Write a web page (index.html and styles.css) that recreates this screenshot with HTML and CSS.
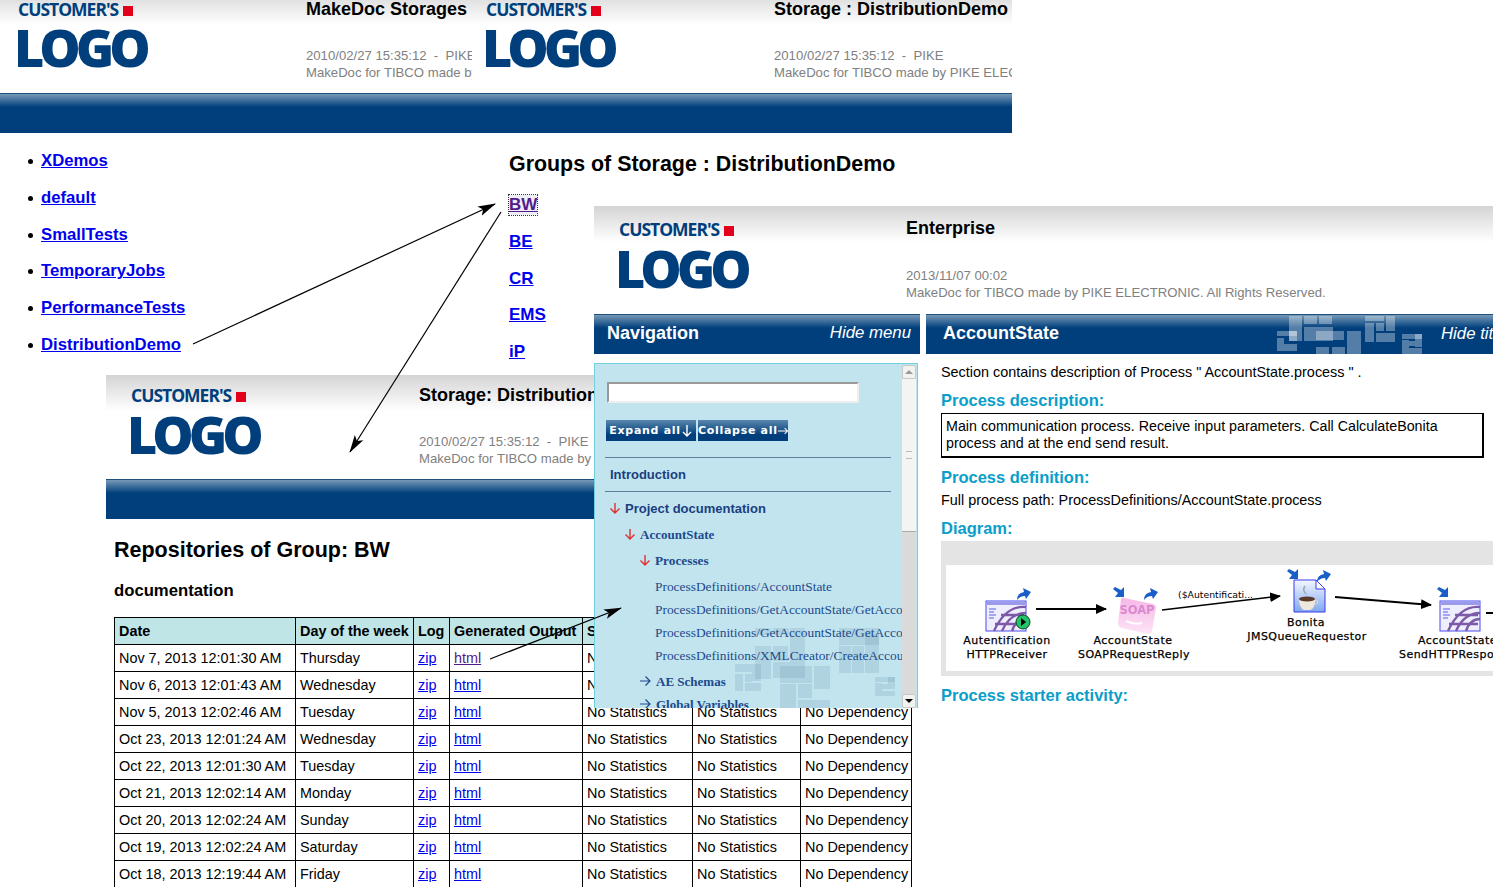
FILE: index.html
```html
<!DOCTYPE html>
<html lang="en">
<head>
  <meta charset="UTF-8" />
  <title>MakeDoc Storages</title>
  <link rel="stylesheet" href="styles.css">
</head>
<body>
<div class="desk">

  <!-- window 1: storages -->
  <div class="win win-storages">
    <div class="win-head">
      <div class="logo"><div class="logo-top">CUSTOMER'S<span class="logo-mark"></span></div><div class="logo-main">LOGO</div></div>
      <div class="head-text">
        <div class="head-title">MakeDoc Storages</div>
        <div class="head-sub">2010/02/27 15:35:12 &nbsp;-&nbsp; PIKE ELECTRONIC</div>
        <div class="head-sub">MakeDoc for TIBCO made by PIKE ELECTRONIC</div>
      </div>
    </div>
    <div class="win-band"></div>
    <ul class="storage-list">
      <li><a href="#">XDemos</a></li>
      <li><a href="#">default</a></li>
      <li><a href="#">SmallTests</a></li>
      <li><a href="#">TemporaryJobs</a></li>
      <li><a href="#">PerformanceTests</a></li>
      <li><a href="#">DistributionDemo</a></li>
    </ul>
  </div>

  <!-- window 2: groups -->
  <div class="win win-groups">
    <div class="win-head">
      <div class="logo"><div class="logo-top">CUSTOMER'S<span class="logo-mark"></span></div><div class="logo-main">LOGO</div></div>
      <div class="head-text">
        <div class="head-title">Storage : DistributionDemo</div>
        <div class="head-sub">2010/02/27 15:35:12 &nbsp;-&nbsp; PIKE</div>
        <div class="head-sub">MakeDoc for TIBCO made by PIKE ELECTRONIC. All Rights Reserved.</div>
      </div>
    </div>
    <div class="win-band"></div>
    <h2 class="groups-title">Groups of Storage : DistributionDemo</h2>
    <div class="group-links">
      <a href="#" class="seen focused">BW</a>
      <a href="#">BE</a>
      <a href="#">CR</a>
      <a href="#">EMS</a>
      <a href="#">iP</a>
    </div>
  </div>

  <!-- window 3: repositories -->
  <div class="win win-repos">
    <div class="win-head">
      <div class="logo"><div class="logo-top">CUSTOMER'S<span class="logo-mark"></span></div><div class="logo-main">LOGO</div></div>
      <div class="head-text">
        <div class="head-title">Storage: DistributionDemo</div>
        <div class="head-sub">2010/02/27 15:35:12 &nbsp;-&nbsp; PIKE</div>
        <div class="head-sub">MakeDoc for TIBCO made by PIKE ELECTRONIC</div>
      </div>
    </div>
    <div class="win-band"></div>
    <div class="repos-body">
      <h2 class="repos-title">Repositories of Group: BW</h2>
      <h3 class="repos-sub">documentation</h3>
      <table class="repos">
        <colgroup>
          <col class="c-date"><col class="c-day"><col class="c-log"><col class="c-out"><col class="c-st"><col class="c-st2"><col class="c-dep">
        </colgroup>
        <thead>
          <tr><th>Date</th><th>Day of the week</th><th>Log</th><th>Generated Output</th><th>Statistics</th><th>Statistics</th><th>Dependency</th></tr>
        </thead>
        <tbody>
          <tr><td>Nov 7, 2013 12:01:30 AM</td><td>Thursday</td><td><a href="#">zip</a></td><td><a href="#" class="seen">html</a></td><td>No Statistics</td><td>No Statistics</td><td>No Dependency</td></tr>
          <tr><td>Nov 6, 2013 12:01:43 AM</td><td>Wednesday</td><td><a href="#">zip</a></td><td><a href="#">html</a></td><td>No Statistics</td><td>No Statistics</td><td>No Dependency</td></tr>
          <tr><td>Nov 5, 2013 12:02:46 AM</td><td>Tuesday</td><td><a href="#">zip</a></td><td><a href="#">html</a></td><td>No Statistics</td><td>No Statistics</td><td>No Dependency</td></tr>
          <tr><td>Oct 23, 2013 12:01:24 AM</td><td>Wednesday</td><td><a href="#">zip</a></td><td><a href="#">html</a></td><td>No Statistics</td><td>No Statistics</td><td>No Dependency</td></tr>
          <tr><td>Oct 22, 2013 12:01:30 AM</td><td>Tuesday</td><td><a href="#">zip</a></td><td><a href="#">html</a></td><td>No Statistics</td><td>No Statistics</td><td>No Dependency</td></tr>
          <tr><td>Oct 21, 2013 12:02:14 AM</td><td>Monday</td><td><a href="#">zip</a></td><td><a href="#">html</a></td><td>No Statistics</td><td>No Statistics</td><td>No Dependency</td></tr>
          <tr><td>Oct 20, 2013 12:02:24 AM</td><td>Sunday</td><td><a href="#">zip</a></td><td><a href="#">html</a></td><td>No Statistics</td><td>No Statistics</td><td>No Dependency</td></tr>
          <tr><td>Oct 19, 2013 12:02:24 AM</td><td>Saturday</td><td><a href="#">zip</a></td><td><a href="#">html</a></td><td>No Statistics</td><td>No Statistics</td><td>No Dependency</td></tr>
          <tr><td>Oct 18, 2013 12:19:44 AM</td><td>Friday</td><td><a href="#">zip</a></td><td><a href="#">html</a></td><td>No Statistics</td><td>No Statistics</td><td>No Dependency</td></tr>
        </tbody>
      </table>
    </div>
  </div>

  <!-- window 4: enterprise -->
  <div class="win win-ent">
    <div class="win-head">
      <div class="logo"><div class="logo-top">CUSTOMER'S<span class="logo-mark"></span></div><div class="logo-main">LOGO</div></div>
      <div class="head-text">
        <div class="head-title">Enterprise</div>
        <div class="head-sub">2013/11/07 00:02</div>
        <div class="head-sub">MakeDoc for TIBCO made by PIKE ELECTRONIC. All Rights Reserved.</div>
      </div>
    </div>
    <div class="ent-cols">
      <div class="nav-col">
        <div class="bar">
          <span class="bar-title">Navigation</span>
          <span class="bar-link">Hide menu</span>
        </div>
        <div class="nav-panel">
          <svg class="panel-deco" viewBox="0 0 300 345" width="300" height="345">
            <g transform="translate(13 0)">
              <rect x="147" y="264" width="16" height="7"/><rect x="165" y="264" width="16" height="7"/><rect x="182" y="264" width="15" height="50"/>
              <rect x="147" y="282" width="16" height="33"/><rect x="165" y="282" width="15" height="15"/><rect x="165" y="298" width="17" height="16"/>
              <rect x="127" y="300" width="17" height="8"/><rect x="127" y="310" width="8" height="17"/><rect x="137" y="310" width="7" height="8"/>
              <rect x="137" y="319" width="16" height="8"/><rect x="144" y="300" width="9" height="17"/>
              <rect x="172" y="302" width="32" height="17"/><rect x="206" y="302" width="16" height="23"/><rect x="172" y="320" width="16" height="25"/>
              <rect x="190" y="320" width="14" height="14"/><rect x="190" y="336" width="32" height="9"/>
              <rect x="231" y="264" width="40" height="17"/><rect x="231" y="282" width="12" height="27"/><rect x="244" y="282" width="12" height="12"/>
              <rect x="257" y="270" width="14" height="39"/><rect x="244" y="295" width="12" height="14"/>
              <rect x="267" y="313" width="20" height="5"/><rect x="267" y="319" width="7" height="13"/><rect x="274" y="320" width="6" height="5"/>
              <rect x="280" y="313" width="7" height="12"/><rect x="274" y="327" width="13" height="5"/>
            </g>
          </svg>
          <div class="panel-scroll">
            <div class="nav-input"></div>
            <div class="nav-btns">
              <span class="nav-btn">Expand all<svg width="12" height="14" viewBox="0 0 12 14"><path d="M6 1V12M2 8l4 4 4-4" fill="none" stroke="#fff" stroke-width="1.4"/></svg></span>
              <span class="nav-btn">Collapse all<svg width="14" height="12" viewBox="0 0 14 12"><path d="M0 6H13M9 2l4 4-4 4" fill="none" stroke="#fff" stroke-width="1.4"/></svg></span>
            </div>
            <div class="nav-intro">Introduction</div>
            <div class="tree tree-l1"><svg class="tw" width="12" height="12" viewBox="0 0 12 12"><path d="M6 1V11M1.500 6.500L6 11l4.500-4.500" fill="none" stroke="#e03030" stroke-width="1.4"/></svg>Project documentation</div>
            <div class="tree tree-l2"><svg class="tw" width="12" height="12" viewBox="0 0 12 12"><path d="M6 1V11M1.500 6.500L6 11l4.500-4.500" fill="none" stroke="#e03030" stroke-width="1.4"/></svg>AccountState</div>
            <div class="tree tree-l3"><svg class="tw" width="12" height="12" viewBox="0 0 12 12"><path d="M6 1V11M1.500 6.500L6 11l4.500-4.500" fill="none" stroke="#e03030" stroke-width="1.4"/></svg>Processes</div>
            <div class="tree tree-leaf">ProcessDefinitions/AccountState</div>
            <div class="tree tree-leaf">ProcessDefinitions/GetAccountState/GetAccountState</div>
            <div class="tree tree-leaf">ProcessDefinitions/GetAccountState/GetAccountBonita</div>
            <div class="tree tree-leaf">ProcessDefinitions/XMLCreator/CreateAccountState</div>
            <div class="tree tree-l3 tree-closed"><svg class="tw" width="12" height="12" viewBox="0 0 12 12"><path d="M1 6H11M6.500 1.500L11 6l-4.500 4.500" fill="none" stroke="#1c4a8c" stroke-width="1.2"/></svg>AE Schemas</div>
            <div class="tree tree-l3 tree-closed"><svg class="tw" width="12" height="12" viewBox="0 0 12 12"><path d="M1 6H11M6.500 1.500L11 6l-4.500 4.500" fill="none" stroke="#1c4a8c" stroke-width="1.2"/></svg>Global Variables</div>
          </div>
          <div class="sbar">
            <div class="sbar-btn"><span class="tri-up"></span></div>
            <div class="sbar-thumb"><span class="grip"></span></div>
            <div class="sbar-track"></div>
            <div class="sbar-btn"><span class="tri-down"></span></div>
          </div>
        </div>
      </div>
      <div class="main-col">
        <div class="bar bar-main">
          <span class="bar-title">AccountState</span>
          <svg class="bar-deco" width="150" height="40" viewBox="0 0 150 40">
            <g>
              <rect x="12" y="1" width="13" height="25"/><rect x="27" y="1" width="13" height="8"/><rect x="42" y="1" width="13" height="8"/>
              <rect x="27" y="12" width="29" height="14"/><rect x="39" y="16" width="28" height="9"/><rect x="39" y="32" width="13" height="8"/>
              <rect x="55" y="32" width="13" height="8"/><rect x="70" y="16" width="14" height="24"/>
              <rect x="0" y="16" width="20" height="5"/><rect x="0" y="23" width="7" height="13"/><rect x="7" y="29" width="13" height="7"/><rect x="12" y="16" width="8" height="10"/>
              <rect x="88" y="1" width="19" height="5"/><rect x="88" y="8" width="9" height="19"/><rect x="99" y="8" width="8" height="8"/>
              <rect x="109" y="1" width="9" height="15"/><rect x="99" y="18" width="19" height="9"/>
              <rect x="125" y="19" width="20" height="5"/><rect x="125" y="25" width="7" height="14"/><rect x="132" y="26" width="6" height="5"/>
              <rect x="138" y="19" width="7" height="13"/><rect x="132" y="33" width="13" height="6"/>
            </g>
          </svg>
          <span class="bar-link bar-link-cut">Hide title</span>
        </div>
        <div class="main-body">
          <p class="main-text">Section contains description of Process " AccountState.process " .</p>
          <h4 class="sec">Process description:</h4>
          <div class="desc-box">Main communication process. Receive input parameters. Call CalculateBonita process and at the end send result.</div>
          <h4 class="sec sec-def">Process definition:</h4>
          <p class="main-text">Full process path: ProcessDefinitions/AccountState.process</p>
          <h4 class="sec sec-dia">Diagram:</h4>
          <div class="diagram">
            <div class="diagram-inner">
              <svg width="560" height="106" viewBox="946 565 560 106">
                <defs>
                  <path id="d-out" d="M0 13 Q0 6 7 5 L6 1 L14 5 L9 12 L8 9 Q3 9 0 13Z" fill="#1a5fc8"/>
                  <path id="d-in" d="M11 10 L11 0 L8 3 L2 0 L0 2 L5 6 L2 10Z" fill="#1a5fc8"/>
                  <g id="d-web">
                    <rect x="0" y="0" width="40" height="30" fill="#eeeeff" stroke="#4a4af0"/>
                    <rect x="1" y="1" width="38" height="3" fill="#9a9ae8"/>
                    <path d="M3 8h7M3 11h5M3 14h7M3 17h5" stroke="#5a5af0"/>
                    <path d="M8 30 Q20 4 40 6 M16 30 Q24 12 40 12 M26 30 Q30 18 40 18 M9 23 H38 M15 14 H38" fill="none" stroke="#7d5aa8" stroke-width="2.4"/>
                  </g>
                  <linearGradient id="d-paper" x1="0" y1="0" x2="0" y2="1"><stop offset="0" stop-color="#f4f8ff"/><stop offset="1" stop-color="#7fa8f0"/></linearGradient>
                  <linearGradient id="d-tile" x1="0" y1="0" x2="0" y2="1"><stop offset="0" stop-color="#f6b8e6"/><stop offset="1" stop-color="#fde4f6"/></linearGradient>
                  <marker id="d-head" markerWidth="11" markerHeight="10" refX="10" refY="5" orient="auto" markerUnits="userSpaceOnUse"><path d="M0 0L11 5L0 10Z" fill="#000"/></marker>
                </defs>
                <use href="#d-web" x="986" y="601"/>
                <use href="#d-out" x="1017" y="587"/>
                <circle cx="1023" cy="622" r="7" fill="#22c46a" stroke="#0a4a2a"/>
                <path d="M1021 618l5 4-5 4Z" fill="#000"/>
                <path d="M1036 609H1106" stroke="#000" stroke-width="2" marker-end="url(#d-head)"/>
                <text x="1007" y="644" class="d-label">Autentification</text>
                <text x="1007" y="658" class="d-label">HTTPReceiver</text>

                <use href="#d-in" x="1113" y="587"/>
                <use href="#d-out" x="1144" y="587"/>
                <path d="M1121 599 Q1121 597 1124 598 L1153 604 Q1156 605 1156 608 L1152 631 Q1151 634 1148 634 L1122 628 Q1118 627 1118 623 Z" fill="url(#d-tile)"/>
                <text x="1137" y="614" class="d-soap">SOAP</text>
                <path d="M1126 621 q8 4 16 2" stroke="#fff" stroke-width="2" fill="none"/>
                <path d="M1162 610L1280 596" stroke="#000" stroke-width="1.6" marker-end="url(#d-head)"/>
                <text x="1178" y="598" class="d-note">($Autentificati...</text>
                <text x="1133" y="644" class="d-label">AccountState</text>
                <text x="1134" y="658" class="d-label">SOAPRequestReply</text>

                <use href="#d-in" x="1287" y="569"/>
                <use href="#d-out" x="1317" y="569"/>
                <path d="M1294 580 H1316 L1325 589 V612 H1294 Z" fill="url(#d-paper)" stroke="#3a3af0"/>
                <path d="M1316 580 V589 H1325 Z" fill="#fff" stroke="#3a3af0"/>
                <path d="M1299 598 H1315 Q1316 608 1310 610 H1304 Q1299 608 1299 598 Z" fill="#efe6dc"/>
                <ellipse cx="1307" cy="599" rx="8" ry="2.500" fill="#5a3a2a"/>
                <path d="M1315 600 q5 1 1 5" stroke="#ddd" fill="none"/>
                <path d="M1305 586 q-3 4 1 8" stroke="#9aa" stroke-width="1.500" fill="none"/>
                <text x="1306" y="626" class="d-label">Bonita</text>
                <text x="1307" y="640" class="d-label">JMSQueueRequestor</text>
                <path d="M1335 597L1431 605" stroke="#000" stroke-width="2" marker-end="url(#d-head)"/>

                <use href="#d-in" x="1437" y="587"/>
                <use href="#d-web" x="1440" y="601"/>
                <text x="1418" y="644" class="d-label d-left">AccountState</text>
                <text x="1399" y="658" class="d-label d-left">SendHTTPResponse</text>
                <path d="M1486 613H1500" stroke="#000" stroke-width="2"/>
              </svg>
            </div>
          </div>
          <h4 class="sec sec-start">Process starter activity:</h4>
        </div>
      </div>
    </div>
  </div>

  <!-- the arrows drawn over the screenshots -->
  <svg class="callouts" width="1493" height="887" viewBox="0 0 1493 887">
    <defs>
      <marker id="call-head" markerWidth="18" markerHeight="12" refX="17" refY="6" orient="auto" markerUnits="userSpaceOnUse"><path d="M0 1L18 6L0 11L4 6Z" fill="#000"/></marker>
    </defs>
    <path d="M193 344L495 204" stroke="#000" stroke-width="1.2" marker-end="url(#call-head)"/>
    <path d="M501 212L350 452" stroke="#000" stroke-width="1.2" marker-end="url(#call-head)"/>
    <path d="M490 659L621 608" stroke="#000" stroke-width="1.2" marker-end="url(#call-head)"/>
  </svg>
</div>
</body>
</html>
```

FILE: styles.css
```css
html, body {
  margin: 0;
  padding: 0;
  background: #fff;
}
body {
  font-family: "Liberation Sans", Arial, sans-serif;
  color: #000;
}
.desk {
  position: relative;
  width: 1493px;
  height: 887px;
  overflow: hidden;
}
a {
  color: #0000ee;
}
a.seen {
  color: #551a8b;
}

/* windows on the canvas */
.win {
  position: absolute;
}
.win-storages {
  left: 0;
  top: -11px;
  width: 480px;
}
.win-groups {
  left: 480px;
  top: -11px;
  width: 532px;
}
.win-repos {
  left: 106px;
  top: 375px;
  width: 806px;
}
.win-ent {
  left: 594px;
  top: 206px;
  width: 899px;
}

/* header */
.win-head {
  display: flex;
  height: 104px;
  background: linear-gradient(#d4d4d4, #fff 36px);
}
.win-storages .win-head {
  padding-left: 18px;
}
.win-groups .win-head {
  padding-left: 6px;
}
.win-repos .win-head {
  padding-left: 25px;
}
.win-ent .win-head {
  padding-left: 25px;
  height: 108px;
}
.logo {
  width: 288px;
  flex: none;
  color: #003f7c;
  font-family: "Open Sans", sans-serif;
  font-weight: 800;
}
.logo-top {
  font-size: 17.5px;
  font-weight: 700;
  letter-spacing: -1px;
  line-height: 18px;
  margin-top: 11px;
}
.logo-mark {
  display: inline-block;
  width: 10px;
  height: 10px;
  margin-left: 5px;
  background: #e2001a;
}
.logo-main {
  font-size: 52px;
  letter-spacing: -5px;
  line-height: 48px;
  margin: 5px 0 0 -4px;
}
.win-repos .logo-main {
  margin-top: 6px;
}
.win-ent .logo-top {
  margin-top: 14px;
}
.win-ent .logo-main {
  margin-top: 6px;
}
.win-ent .logo {
  width: 287px;
}
.head-text {
  min-width: 0;
  overflow: hidden;
  white-space: nowrap;
}
.win-storages .head-text {
  width: 166px;
}
.head-title {
  font-size: 18px;
  font-weight: 700;
  line-height: 20px;
  margin-top: 10px;
  margin-bottom: 28px;
}
.win-ent .head-title {
  margin-top: 12px;
  margin-bottom: 29px;
}
.head-sub {
  font-size: 13.15px;
  line-height: 17px;
  color: #808080;
}
.win-band {
  height: 40px;
  box-sizing: border-box;
  border-top: 1px solid #1d4f7d;
  background: linear-gradient(#7799b8, #003f7c 13px);
}

/* window 1 */
.storage-list {
  list-style: none;
  margin: 0;
  padding: 18px 0 0 41px;
  font-size: 16.7px;
  font-weight: 700;
}
.storage-list li {
  position: relative;
  height: 36.8px;
  line-height: 20px;
}
.storage-list li::before {
  content: "";
  position: absolute;
  left: -13px;
  top: 8px;
  width: 5px;
  height: 5px;
  border-radius: 50%;
  background: #000;
}

/* window 2 */
.groups-title {
  font-size: 21.4px;
  line-height: 26px;
  margin: 18px 0 0 29px;
}
.group-links {
  display: flex;
  flex-direction: column;
  align-items: flex-start;
  gap: 16.8px;
  margin: 18px 0 0 29px;
  font-size: 17px;
  font-weight: 700;
  line-height: 20px;
}
.focused {
  outline: 1px dotted #333;
  background: #eeeef6;
}

/* window 3 */
.repos-body {
  padding: 19px 0 0 8px;
}
.repos-title {
  font-size: 21.5px;
  line-height: 25px;
  margin: 0;
}
.repos-sub {
  font-size: 16.7px;
  line-height: 20px;
  margin: 18px 0 0;
}
table.repos {
  border-collapse: collapse;
  table-layout: fixed;
  width: 797px;
  margin-top: 16px;
  font-size: 14.4px;
}
.repos th,
.repos td {
  border: 1px solid #000;
  padding: 0 4px;
  height: 26px;
  line-height: 17px;
  text-align: left;
  white-space: nowrap;
  overflow: hidden;
}
.repos th {
  background: #bfe5e6;
}
.c-date { width: 181px; }
.c-day { width: 118px; }
.c-log { width: 36px; }
.c-out { width: 133px; }
.c-st { width: 110px; }
.c-st2 { width: 108px; }
.c-dep { width: 111px; }

/* window 4 */
.ent-cols {
  display: flex;
  gap: 6px;
}
.nav-col {
  width: 326px;
  flex: none;
}
.main-col {
  flex: 1;
  min-width: 0;
  background: #fff;
  height: 533px;
}
.bar {
  position: relative;
  display: flex;
  align-items: center;
  justify-content: space-between;
  height: 40px;
  box-sizing: border-box;
  padding: 0 9px 3px 13px;
  border-top: 1px solid #1d4f7d;
  background: linear-gradient(#7799b8, #003f7c 13px);
  color: #fff;
  overflow: hidden;
}
.bar-main {
  padding-left: 17px;
}
.bar-title {
  font-size: 18px;
  font-weight: 700;
}
.bar-link {
  font-size: 16.8px;
  font-style: italic;
}
.bar-link-cut {
  position: absolute;
  left: 515px;
  top: 9px;
  white-space: nowrap;
}
.bar-deco {
  position: absolute;
  left: 351px;
  top: 0;
}
.bar-deco rect {
  fill: #fff;
  opacity: 0.33;
}

/* navigation panel */
.nav-panel {
  position: relative;
  display: flex;
  width: 324px;
  height: 345px;
  box-sizing: border-box;
  margin-top: 9px;
  border: 1px solid #72cfe0;
  border-bottom: 0;
  background: #c2e4ef;
  overflow: hidden;
}
.panel-deco {
  position: absolute;
  left: 0;
  top: 0;
}
.panel-deco rect {
  fill: #6f97ac;
  opacity: 0.22;
}
.panel-scroll {
  position: relative;
  width: 307px;
  flex: none;
  overflow: hidden;
  white-space: nowrap;
  color: #1c4a8c;
}
.nav-input {
  width: 248px;
  height: 17px;
  margin: 18px 0 0 12px;
  background: #fff;
  border: 2px solid;
  border-color: #999 #eee #eee #999;
}
.nav-btns {
  display: flex;
  gap: 2px;
  margin: 17px 0 0 11px;
}
.nav-btn {
  display: flex;
  align-items: center;
  justify-content: center;
  width: 90px;
  height: 21px;
  background: linear-gradient(#5a86ac, #003f7c 70%);
  color: #fff;
  font-family: "DejaVu Sans", sans-serif;
  font-weight: 700;
  font-size: 11px;
  letter-spacing: 0.7px;
}
.nav-intro {
  margin: 16px 11px 0 10px;
  padding: 9px 5px;
  border-top: 1px solid #5f7f9f;
  border-bottom: 1px solid #5f7f9f;
  font-size: 13px;
  line-height: 15px;
  font-weight: 700;
  color: #1a3f7f;
}
.tree {
  position: relative;
  font-size: 13px;
  line-height: 15px;
}
.tw {
  position: absolute;
  top: 1px;
}
.tree-l1 {
  margin-top: 9px;
  padding-left: 30px;
  font-weight: 700;
  color: #1a3f7f;
}
.tree-l1 .tw {
  left: 14px;
}
.tree-l2 {
  margin-top: 11px;
  padding-left: 45px;
  font-family: "Liberation Serif", serif;
  font-weight: 700;
}
.tree-l2 .tw {
  left: 29px;
}
.tree-l3 {
  margin-top: 11px;
  padding-left: 60px;
  font-family: "Liberation Serif", serif;
  font-weight: 700;
  font-size: 13.3px;
}
.tree-l3 .tw {
  left: 44px;
}
.tree-closed {
  margin-top: 8px;
  padding-left: 61px;
  font-size: 13px;
}
.tree-leaf {
  margin-top: 8px;
  padding-left: 60px;
  font-family: "Liberation Serif", serif;
  font-size: 13.4px;
}
.tree-l3 + .tree-leaf {
  margin-top: 11px;
}
.tree-leaf + .tree-closed {
  margin-top: 11px;
}

/* scrollbar */
.sbar {
  display: flex;
  flex-direction: column;
  width: 14px;
  margin-top: 1px;
}
.sbar-btn {
  display: flex;
  align-items: center;
  justify-content: center;
  height: 14px;
  flex: none;
  background: #f2f2f0;
  border: 1px solid #c8c8c8;
  box-sizing: border-box;
  border-radius: 2px;
}
.tri-up {
  border: 4px solid transparent;
  border-top: 0;
  border-bottom: 4px solid #999;
}
.tri-down {
  border: 4px solid transparent;
  border-bottom: 0;
  border-top: 4px solid #000;
}
.sbar-thumb {
  display: flex;
  align-items: center;
  justify-content: center;
  height: 153px;
  flex: none;
  box-sizing: border-box;
  background: #f4f4f2;
  border-bottom: 1px solid #aaa;
}
.grip {
  width: 6px;
  height: 6px;
  border-top: 1px solid #bbb;
  border-bottom: 1px solid #bbb;
}
.sbar-track {
  flex: 1;
  background: #dadada;
}

/* main column */
.main-body {
  padding: 10px 9px 0 15px;
}
.main-text {
  font-size: 14.4px;
  line-height: 17px;
  margin: 0;
}
.sec {
  font-size: 16.5px;
  line-height: 19px;
  font-weight: 700;
  color: #0a9ec9;
  margin: 10px 0 3px;
}
.desc-box {
  width: 532px;
  padding: 4px;
  font-size: 14.27px;
  line-height: 17px;
  border: 1px solid #000;
  border-right-width: 2px;
  border-bottom-width: 2px;
}
.sec-def {
  margin-top: 10px;
  margin-bottom: 5px;
}
.sec-dia {
  margin-top: 10px;
  margin-bottom: 3px;
}
.diagram {
  margin-right: -9px;
  height: 135px;
  box-sizing: border-box;
  padding: 24px 0 5px 5px;
  background: #e4e4e4;
  overflow: hidden;
}
.diagram-inner {
  height: 106px;
  background: #fff;
  overflow: hidden;
}
.diagram-inner svg {
  display: block;
}
.d-label {
  font-family: "DejaVu Sans", sans-serif;
  font-size: 11px;
  letter-spacing: 0.45px;
  text-anchor: middle;
  stroke: #000;
  stroke-width: 0.25px;
}
.d-left {
  text-anchor: start;
}
.d-note {
  font-family: "DejaVu Sans", sans-serif;
  font-size: 9.3px;
}
.d-soap {
  font-family: "DejaVu Sans", sans-serif;
  font-size: 11.5px;
  font-weight: 700;
  fill: #d98ad0;
  text-anchor: middle;
}
.sec-start {
  margin-top: 10px;
}

.callouts {
  position: absolute;
  left: 0;
  top: 0;
  pointer-events: none;
}
```
